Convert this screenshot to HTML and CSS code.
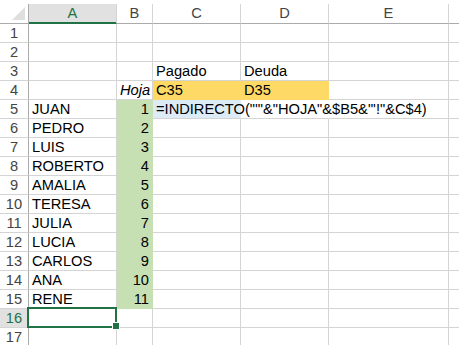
FILE: index.html
```html
<!DOCTYPE html>
<html lang="es">
<head>
  <meta charset="UTF-8">
  <title>Hoja</title>
  <link rel="stylesheet" href="styles.css">
</head>
<body>

<div class="sheet">
  <div class="grid">
    <!-- column headers -->
    <div class="corner"><span class="tri"></span></div>
    <div class="colhead active">A</div>
    <div class="colhead">B</div>
    <div class="colhead">C</div>
    <div class="colhead">D</div>
    <div class="colhead">E</div>
    <div class="colhead"></div>

    <div class="rowhead">1</div><div class="cell"></div><div class="cell"></div><div class="cell"></div><div class="cell"></div><div class="cell"></div><div class="cell"></div>
    <div class="rowhead">2</div><div class="cell"></div><div class="cell"></div><div class="cell"></div><div class="cell"></div><div class="cell"></div><div class="cell"></div>
    <div class="rowhead">3</div><div class="cell"></div><div class="cell"></div><div class="cell">Pagado</div><div class="cell">Deuda</div><div class="cell"></div><div class="cell"></div>
    <div class="rowhead">4</div><div class="cell"></div><div class="cell num italic">Hoja</div><div class="cell orange">C35</div><div class="cell orange">D35</div><div class="cell"></div><div class="cell"></div>
    <div class="rowhead">5</div><div class="cell">JUAN</div><div class="cell num green">1</div><div class="cell blue overflow">=INDIRECTO("'"&amp;"HOJA"&amp;$B5&amp;"'!"&amp;C$4)</div><div class="cell noright"></div><div class="cell"></div><div class="cell"></div>
    <div class="rowhead">6</div><div class="cell">PEDRO</div><div class="cell num green">2</div><div class="cell"></div><div class="cell"></div><div class="cell"></div><div class="cell"></div>
    <div class="rowhead">7</div><div class="cell">LUIS</div><div class="cell num green">3</div><div class="cell"></div><div class="cell"></div><div class="cell"></div><div class="cell"></div>
    <div class="rowhead">8</div><div class="cell">ROBERTO</div><div class="cell num green">4</div><div class="cell"></div><div class="cell"></div><div class="cell"></div><div class="cell"></div>
    <div class="rowhead">9</div><div class="cell">AMALIA</div><div class="cell num green">5</div><div class="cell"></div><div class="cell"></div><div class="cell"></div><div class="cell"></div>
    <div class="rowhead">10</div><div class="cell">TERESA</div><div class="cell num green">6</div><div class="cell"></div><div class="cell"></div><div class="cell"></div><div class="cell"></div>
    <div class="rowhead">11</div><div class="cell">JULIA</div><div class="cell num green">7</div><div class="cell"></div><div class="cell"></div><div class="cell"></div><div class="cell"></div>
    <div class="rowhead">12</div><div class="cell">LUCIA</div><div class="cell num green">8</div><div class="cell"></div><div class="cell"></div><div class="cell"></div><div class="cell"></div>
    <div class="rowhead">13</div><div class="cell">CARLOS</div><div class="cell num green">9</div><div class="cell"></div><div class="cell"></div><div class="cell"></div><div class="cell"></div>
    <div class="rowhead">14</div><div class="cell">ANA</div><div class="cell num green">10</div><div class="cell"></div><div class="cell"></div><div class="cell"></div><div class="cell"></div>
    <div class="rowhead">15</div><div class="cell">RENE</div><div class="cell num green">11</div><div class="cell"></div><div class="cell"></div><div class="cell"></div><div class="cell"></div>
    <div class="rowhead active">16</div><div class="cell"></div><div class="cell"></div><div class="cell"></div><div class="cell"></div><div class="cell"></div><div class="cell"></div>
    <div class="rowhead">17</div><div class="cell"></div><div class="cell"></div><div class="cell"></div><div class="cell"></div><div class="cell"></div><div class="cell"></div>
  </div>

  <!-- selected cell A16 -->
  <div class="selection"></div>
  <div class="handle"></div>
</div>

</body>
</html>
```

FILE: styles.css
```css
body {
  margin: 0;
  background: #ffffff;
  font-family: "Liberation Sans", Arial, sans-serif;
  overflow: hidden;
}

.sheet {
  position: relative;
  padding-top: 4px;
  width: 459px;
  height: 345px;
  box-sizing: border-box;
  overflow: hidden;
}

.grid {
  display: grid;
  grid-template-columns: 29px 88px 36px 88px 88px 120px 40px;
  grid-template-rows: 20px;
  grid-auto-rows: 19px;
}

.grid > div {
  box-sizing: border-box;
  border-right: 1px solid #d4d4d4;
  border-bottom: 1px solid #d4d4d4;
  font-size: 14.67px;
  line-height: 18px;
  white-space: nowrap;
  overflow: hidden;
}

.corner {
  position: relative;
  border-right-color: #ababab !important;
  border-bottom-color: #ababab !important;
}

.corner .tri {
  position: absolute;
  right: 3px;
  bottom: 3px;
  width: 13px;
  height: 13px;
  background: #dfdfdf;
  clip-path: polygon(100% 0, 100% 100%, 0 100%);
}

.colhead {
  text-align: center;
  color: #444444;
  border-bottom-color: #ababab !important;
}

.colhead.active {
  background: #e1e1e1;
  color: #217346;
  border-bottom-color: #217346 !important;
  box-shadow: inset 0 -1px 0 #217346;
}

.rowhead {
  text-align: center;
  color: #444444;
  border-right-color: #ababab !important;
}

.rowhead.active {
  background: #e1e1e1;
  color: #217346;
}

.cell {
  padding: 0 3px;
  color: #000000;
}

.num {
  text-align: right;
}

.italic {
  font-style: italic;
}

.green {
  background: #c6e0b4;
  border-color: #c6e0b4 !important;
}

.orange {
  background: #ffd966;
  border-color: #ffd966 !important;
}

.blue {
  background: #ddebf7;
  border-right-color: #ddebf7 !important;
}

.grid > .overflow {
  overflow: visible;
  position: relative;
  z-index: 1;
}

.noright {
  border-right-color: transparent !important;
}

.selection {
  position: absolute;
  left: 27px;
  top: 307px;
  width: 90px;
  height: 21px;
  box-sizing: border-box;
  border: 2px solid #217346;
}

.handle {
  position: absolute;
  left: 112px;
  top: 322px;
  width: 6px;
  height: 6px;
  background: #217346;
  border: 1px solid #ffffff;
}
```
